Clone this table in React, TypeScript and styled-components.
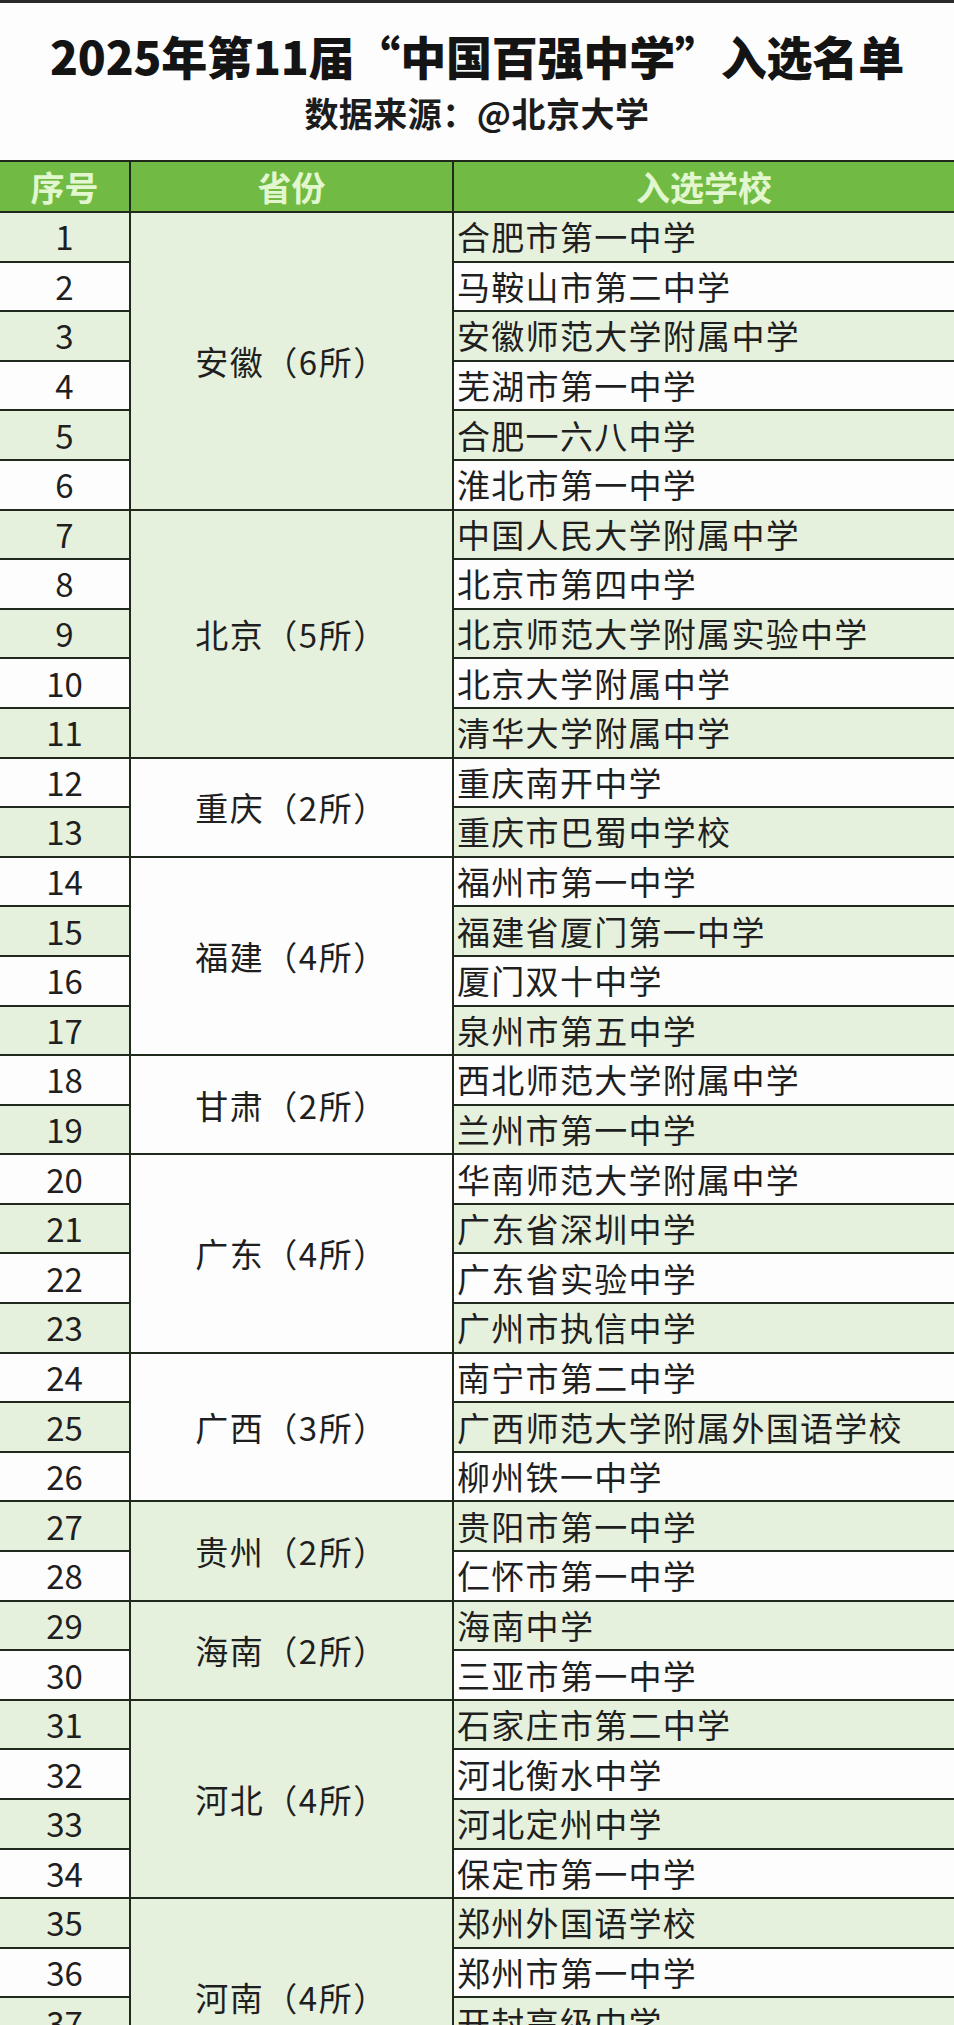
import styled, { createGlobalStyle } from "styled-components";

const GlobalStyle = createGlobalStyle`
  html, body {
    margin: 0;
    padding: 0;
    overflow: hidden;
    background: #fdfdfd;
  }
  body {
    font-family: "Noto Sans CJK SC", "Noto Sans", sans-serif;
    color: #1f1f1f;
  }
`;

const Page = styled.div`
  width: 954px;
  height: 2025px;
  overflow: hidden;
  border-top: 3px solid #2a2a2a;
  box-sizing: border-box;
`;

const Heading = styled.header`
  display: flex;
  flex-direction: column;
  align-items: center;
  padding: 24px 0 26px;
`;

const Title = styled.h1`
  margin: 0;
  font-size: 46px;
  line-height: 56px;
  font-weight: 800;
  color: #141414;
  letter-spacing: -0.2px;
`;

const Source = styled.div`
  margin-top: 9px;
  font-size: 34px;
  line-height: 42px;
  font-weight: 700;
  color: #1c1c1c;
  letter-spacing: 0.5px;
`;

const Table = styled.table`
  width: 100%;
  table-layout: fixed;
  border-collapse: collapse;
  border-top: 2px solid #1f2a1d;
`;

const HeadCell = styled.th`
  height: 49px;
  padding: 0;
  background: #71bb44;
  color: #e2f7cf;
  font-size: 34px;
  font-weight: 700;
  text-align: center;
  border: 2px solid #1f2a1d;
  border-top: none;
  &:first-child {
    border-left: none;
  }
  &:last-child {
    border-right: none;
  }
`;

const Row = styled.tr<{ $tint: boolean }>`
  height: 49.6px;
  background: ${(p) => (p.$tint ? "#e6f1dd" : "#fdfdfd")};
`;

const NumCell = styled.td`
  padding: 0;
  text-align: center;
  font-size: 33px;
  line-height: 1;
  border: 2px solid #1f2a1d;
  border-left: none;
`;

const ProvinceCell = styled.td<{ $tint: boolean }>`
  padding: 0;
  text-align: center;
  font-size: 33px;
  letter-spacing: 1.5px;
  background: ${(p) => (p.$tint ? "#e6f1dd" : "#fdfdfd")};
  border: 2px solid #1f2a1d;
`;

const SchoolCell = styled.td`
  padding: 0 0 0 3px;
  text-align: left;
  font-size: 33px;
  letter-spacing: 1.3px;
  line-height: 1;
  white-space: nowrap;
  border: 2px solid #1f2a1d;
  border-right: none;
`;

type Group = { province: string; tint: boolean; schools: string[] };

const groups: Group[] = [
  {
    province: "安徽",
    tint: true,
    schools: [
      "合肥市第一中学",
      "马鞍山市第二中学",
      "安徽师范大学附属中学",
      "芜湖市第一中学",
      "合肥一六八中学",
      "淮北市第一中学",
    ],
  },
  {
    province: "北京",
    tint: true,
    schools: [
      "中国人民大学附属中学",
      "北京市第四中学",
      "北京师范大学附属实验中学",
      "北京大学附属中学",
      "清华大学附属中学",
    ],
  },
  { province: "重庆", tint: false, schools: ["重庆南开中学", "重庆市巴蜀中学校"] },
  {
    province: "福建",
    tint: false,
    schools: ["福州市第一中学", "福建省厦门第一中学", "厦门双十中学", "泉州市第五中学"],
  },
  { province: "甘肃", tint: false, schools: ["西北师范大学附属中学", "兰州市第一中学"] },
  {
    province: "广东",
    tint: false,
    schools: ["华南师范大学附属中学", "广东省深圳中学", "广东省实验中学", "广州市执信中学"],
  },
  {
    province: "广西",
    tint: false,
    schools: ["南宁市第二中学", "广西师范大学附属外国语学校", "柳州铁一中学"],
  },
  { province: "贵州", tint: true, schools: ["贵阳市第一中学", "仁怀市第一中学"] },
  { province: "海南", tint: true, schools: ["海南中学", "三亚市第一中学"] },
  {
    province: "河北",
    tint: true,
    schools: ["石家庄市第二中学", "河北衡水中学", "河北定州中学", "保定市第一中学"],
  },
  {
    province: "河南",
    tint: true,
    schools: ["郑州外国语学校", "郑州市第一中学", "开封高级中学", "河南省实验中学"],
  },
];

export default function App() {
  let n = 0;
  return (
    <Page>
      <GlobalStyle />
      <Heading>
        <Title>2025年第11届“中国百强中学”入选名单</Title>
        <Source>数据来源：@北京大学</Source>
      </Heading>
      <Table>
        <colgroup>
          <col style={{ width: 130 }} />
          <col style={{ width: 323 }} />
          <col />
        </colgroup>
        <thead>
          <tr>
            <HeadCell>序号</HeadCell>
            <HeadCell>省份</HeadCell>
            <HeadCell>入选学校</HeadCell>
          </tr>
        </thead>
        <tbody>
          {groups.map((g) =>
            g.schools.map((school, i) => {
              n += 1;
              return (
                <Row key={n} $tint={n % 2 === 1}>
                  <NumCell>{n}</NumCell>
                  {i === 0 && (
                    <ProvinceCell rowSpan={g.schools.length} $tint={g.tint}>
                      {g.province}（{g.schools.length}所）
                    </ProvinceCell>
                  )}
                  <SchoolCell>{school}</SchoolCell>
                </Row>
              );
            })
          )}
        </tbody>
      </Table>
    </Page>
  );
}
